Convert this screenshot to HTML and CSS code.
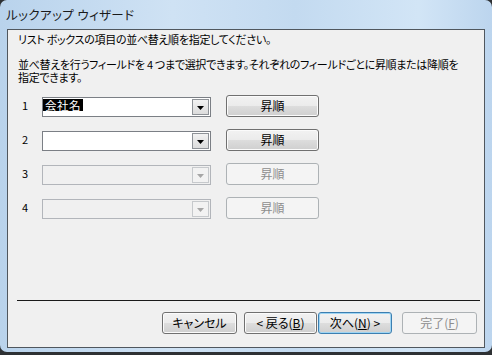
FILE: index.html
```html
<!DOCTYPE html>
<html lang="ja">
<head>
<meta charset="utf-8">
<title>ルックアップ ウィザード</title>
<link rel="stylesheet" href="styles.css">
</head>
<body>
<div class="window">
  <div class="titlebar"><span class="title">ルックアップ ウィザード</span></div>
  <div class="client">
    <p class="intro">リスト ボックスの項目の並べ替え順を指定してください。</p>
    <p class="desc"><span class="line">並べ替えを行うフィールドを 4 つまで選択できます。それぞれのフィールドごとに昇順または降順を</span><span class="line">指定できます。</span></p>
    <div class="rows">
      <div class="row">
        <span class="num">1</span>
        <div class="combo"><span class="value"><span class="sel">会社名</span></span><span class="drop"><svg width="7" height="4" viewBox="0 0 7 4"><polygon points="0,0 7,0 3.5,4" /></svg></span></div>
        <button class="btn sort">昇順</button>
      </div>
      <div class="row">
        <span class="num">2</span>
        <div class="combo"><span class="value"></span><span class="drop"><svg width="7" height="4" viewBox="0 0 7 4"><polygon points="0,0 7,0 3.5,4" /></svg></span></div>
        <button class="btn sort">昇順</button>
      </div>
      <div class="row">
        <span class="num">3</span>
        <div class="combo disabled"><span class="value"></span><span class="drop"><svg width="7" height="4" viewBox="0 0 7 4"><polygon points="0,0 7,0 3.5,4" /></svg></span></div>
        <button class="btn sort" disabled>昇順</button>
      </div>
      <div class="row">
        <span class="num">4</span>
        <div class="combo disabled"><span class="value"></span><span class="drop"><svg width="7" height="4" viewBox="0 0 7 4"><polygon points="0,0 7,0 3.5,4" /></svg></span></div>
        <button class="btn sort" disabled>昇順</button>
      </div>
    </div>
    <hr class="sep">
    <div class="footer">
      <button class="btn cancel">キャンセル</button>
      <button class="btn back">&lt; 戻る(<u>B</u>)</button>
      <button class="btn next default">次へ(<u>N</u>) &gt;</button>
      <button class="btn finish" disabled>完了(<u>F</u>)</button>
    </div>
  </div>
</div>
</body>
</html>
```
FILE: styles.css
```css
* { box-sizing: border-box; }
html, body { margin: 0; padding: 0; }
body {
  width: 492px;
  height: 355px;
  background: #2e3134;
  overflow: hidden;
  font-family: "Noto Sans CJK JP", "Noto Sans", sans-serif;
  font-size: 11px;
  font-feature-settings: "palt";
  color: #000;
}
.window {
  width: 492px;
  height: 352px;
  border-radius: 7px;
  background: linear-gradient(90deg, #b9d3ec 0%, #cfe2f4 35%, #c3daf0 60%, #d2e5f6 85%, #bcd5ee 100%);
  padding: 0 7px 0 7px;
  display: flex;
  flex-direction: column;
}
.titlebar {
  height: 29px;
  flex: none;
  padding: 7px 0 0 0;
  margin-left: -1px;
}
.title {
  font-size: 12.5px;
  line-height: 14px;
  color: #1a1a1a;
  letter-spacing: 0.4px;
}
.client {
  width: 478px;
  height: 319px;
  flex: none;
  border: 1px solid #50575e;
  background: #f0f0f0;
  padding: 3px 0 13px 10px;
  display: flex;
  flex-direction: column;
}
.intro, .desc {
  margin: 0;
  line-height: 13px;
  white-space: nowrap;
  letter-spacing: -0.3px;
}
.line { display: block; }
.desc { margin-top: 12px; }
.desc .line + .line { margin-top: 0; }
.rows {
  margin-top: 11px;
  display: flex;
  flex-direction: column;
  gap: 12px;
  margin-left: -10px;
}
.row {
  display: flex;
  align-items: flex-start;
  height: 22px;
  padding-left: 14px;
}
.num {
  width: 20px;
  line-height: 13px;
  padding-top: 4px;
}
.combo {
  width: 169px;
  height: 20px;
  margin-top: 2px;
  border: 1px solid #7b7f85;
  background: #fff;
  display: flex;
  justify-content: space-between;
  align-items: stretch;
}
.value {
  padding: 1px 0 0 0;
  line-height: 12px;
}
.sel {
  display: inline-block;
  background: #000;
  color: #fff;
  padding: 0 2px;
  height: 12px;
  line-height: 12px;
  font-size: 11.5px;
  letter-spacing: 0.5px;
}
.drop {
  width: 17px;
  border: 1px solid #8e9297;
  margin: 1px;
  background: linear-gradient(#f2f2f2, #dcdcdc);
  display: flex;
  align-items: center;
  justify-content: center;
  padding-top: 2px;
}
.drop polygon { fill: #000; }
.combo.disabled {
  border-color: #b2b5ba;
  background: #f0f0f0;
}
.combo.disabled .drop {
  border-color: #c6c9cc;
  background: #f2f2f2;
}
.combo.disabled .drop polygon { fill: #a6a6a6; }
.btn {
  font: inherit;
  font-size: 12px;
  height: 22px;
  line-height: 18px;
  padding: 0;
  color: #000;
  border: 1px solid #707070;
  border-radius: 3px;
  background: linear-gradient(#f2f2f2 0%, #ebebeb 50%, #dddddd 51%, #cfcfcf 100%);
  box-shadow: inset 0 0 0 1px #fbfbfb;
  text-align: center;
  white-space: nowrap;
}
.btn:disabled {
  color: #8d8d8d;
  border-color: #adb2b5;
  background: #f4f4f4;
  box-shadow: none;
}
.btn u { text-underline-offset: 1px; }
.sort {
  width: 93px;
  margin-left: 15px;
}
.sep {
  margin: auto 0 0 -1px;
  width: 463px;
  height: 0;
  border: 0;
  border-top: 1px solid #1a1a1a;
}
.footer {
  margin-top: 11px;
  display: flex;
  padding-left: 144px;
}
.cancel { width: 75px; }
.back { width: 73px; margin-left: 7px; }
.next { width: 74px; margin-left: 1px; }
.finish { width: 75px; margin-left: 10px; }
.btn.default {
  border-color: #3c7fb1;
  box-shadow: inset 0 0 0 1px #9fd5f3;
}
```
